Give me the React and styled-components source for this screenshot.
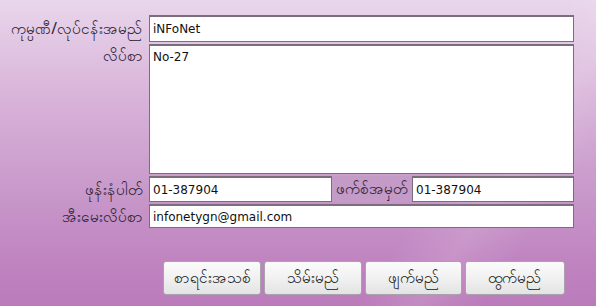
import styled, { createGlobalStyle } from "styled-components";

const GlobalStyle = createGlobalStyle`
  html, body {
    margin: 0;
    padding: 0;
  }
  body {
    font-family: "DejaVu Sans", "Noto Sans", sans-serif;
  }
`;

const Page = styled.div`
  position: relative;
  width: 596px;
  height: 306px;
  box-sizing: border-box;
  padding: 15px 22px 0 0;
  overflow: hidden;
  background:
    linear-gradient(125deg, transparent 70%, rgba(255, 255, 255, 0.12) 78%, transparent 86%),
    linear-gradient(180deg, #e9d6eb 0%, #d9b5da 30%, #c99bcb 60%, #c084c1 85%, #ba7bba 100%);
`;

const Form = styled.div`
  display: grid;
  grid-template-columns: 143px 1fr;
  column-gap: 6px;
  row-gap: 2px;
  align-items: center;
`;

const Label = styled.div`
  justify-self: end;
  align-self: ${(p) => (p.$top ? "start" : "center")};
  padding-top: ${(p) => (p.$top ? "2px" : "0")};
  font-family: "Noto Sans", "DejaVu Sans", sans-serif;
  font-size: 15.5px;
  line-height: 1.2;
  color: #2a2030;
  white-space: nowrap;
`;

const Field = styled.input`
  box-sizing: border-box;
  flex: ${(p) => (p.$w ? `0 0 ${p.$w}px` : "1 1 auto")};
  width: ${(p) => (p.$w ? `${p.$w}px` : "100%")};
  min-width: 0;
  height: ${(p) => p.$h || 27}px;
  margin: 0;
  padding: 0 3px;
  border: 1px solid #7c6c7e;
  border-top-width: 2px;
  background: #fff;
  font-family: "DejaVu Sans", sans-serif;
  font-size: 12px;
  color: #111;
  outline: none;
`;

const Area = styled.textarea`
  box-sizing: border-box;
  width: 100%;
  height: 130px;
  margin: 0;
  padding: 4px 3px;
  border: 1px solid #7c6c7e;
  border-top-width: 2px;
  background: #fff;
  font-family: "DejaVu Sans", sans-serif;
  font-size: 12px;
  color: #111;
  resize: none;
  outline: none;
  display: block;
`;

const PhoneRow = styled.div`
  display: flex;
  align-items: stretch;
`;

const FaxLabel = styled.div`
  flex: 0 0 80px;
  display: flex;
  align-items: center;
  justify-content: center;
  background: #c49ac7;
  font-family: "Noto Sans", "DejaVu Sans", sans-serif;
  font-size: 15.5px;
  color: #2a2030;
  white-space: nowrap;
`;

const Buttons = styled.div`
  display: flex;
  gap: 3px;
  margin: 33px 0 0 163px;
`;

const Button = styled.button`
  width: ${(p) => p.$w || 98}px;
  height: 34px;
  border: 1px solid #a9a2ab;
  border-radius: 3px;
  background: linear-gradient(180deg, #fbfbfb 0%, #f1f1f1 50%, #e3e3e3 100%);
  font-family: "Noto Sans", "DejaVu Sans", sans-serif;
  font-size: 15.5px;
  color: #222;
  padding: 0;
`;

export default function App() {
  return (
    <>
      <GlobalStyle />
      <Page>
        <Form>
          <Label>ကုမ္ပဏီ/လုပ်ငန်းအမည်</Label>
          <Field defaultValue="iNFoNet" />
          <Label $top>လိပ်စာ</Label>
          <Area defaultValue="No-27" />
          <Label>ဖုန်းနံပါတ်</Label>
          <PhoneRow>
            <Field $h={26} $w={183} defaultValue="01-387904" />
            <FaxLabel>ဖက်စ်အမှတ်</FaxLabel>
            <Field $h={26} defaultValue="01-387904" />
          </PhoneRow>
          <Label>အီးမေးလိပ်စာ</Label>
          <Field $h={24} defaultValue="infonetygn@gmail.com" />
        </Form>
        <Buttons>
          <Button>စာရင်းအသစ်</Button>
          <Button>သိမ်းမည်</Button>
          <Button $w={97}>ဖျက်မည်</Button>
          <Button $w={100}>ထွက်မည်</Button>
        </Buttons>
      </Page>
    </>
  );
}
